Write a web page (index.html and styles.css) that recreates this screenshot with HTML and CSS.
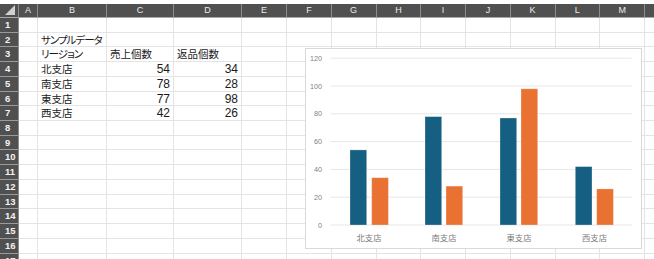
FILE: index.html
```html
<!DOCTYPE html>
<html lang="ja">
<head>
    <meta charset="UTF-8">
    <title>サンプルデータ</title>
    <link rel="stylesheet" href="styles.css">
</head>
<body>

<div class="sheet">
    <!-- column headers -->
    <div class="hd corner"><span class="tri"></span></div>
    <div class="hd">A</div><div class="hd">B</div><div class="hd">C</div><div class="hd">D</div><div class="hd">E</div>
    <div class="hd">F</div><div class="hd">G</div><div class="hd">H</div><div class="hd">I</div><div class="hd">J</div>
    <div class="hd">K</div><div class="hd">L</div><div class="hd">M</div><div class="hd"></div>

    <div class="rh">1</div><div class="c"></div><div class="c"></div><div class="c"></div><div class="c"></div><div class="c"></div><div class="c"></div><div class="c"></div><div class="c"></div><div class="c"></div><div class="c"></div><div class="c"></div><div class="c"></div><div class="c"></div><div class="c"></div>
    <div class="rh">2</div><div class="c"></div><div class="c txt kana">サンプルデータ</div><div class="c"></div><div class="c"></div><div class="c"></div><div class="c"></div><div class="c"></div><div class="c"></div><div class="c"></div><div class="c"></div><div class="c"></div><div class="c"></div><div class="c"></div><div class="c"></div>
    <div class="rh">3</div><div class="c"></div><div class="c txt kana">リージョン</div><div class="c txt">売上個数</div><div class="c txt">返品個数</div><div class="c"></div><div class="c"></div><div class="c"></div><div class="c"></div><div class="c"></div><div class="c"></div><div class="c"></div><div class="c"></div><div class="c"></div><div class="c"></div>
    <div class="rh">4</div><div class="c"></div><div class="c txt">北支店</div><div class="c num">54</div><div class="c num">34</div><div class="c"></div><div class="c"></div><div class="c"></div><div class="c"></div><div class="c"></div><div class="c"></div><div class="c"></div><div class="c"></div><div class="c"></div><div class="c"></div>
    <div class="rh">5</div><div class="c"></div><div class="c txt">南支店</div><div class="c num">78</div><div class="c num">28</div><div class="c"></div><div class="c"></div><div class="c"></div><div class="c"></div><div class="c"></div><div class="c"></div><div class="c"></div><div class="c"></div><div class="c"></div><div class="c"></div>
    <div class="rh">6</div><div class="c"></div><div class="c txt">東支店</div><div class="c num">77</div><div class="c num">98</div><div class="c"></div><div class="c"></div><div class="c"></div><div class="c"></div><div class="c"></div><div class="c"></div><div class="c"></div><div class="c"></div><div class="c"></div><div class="c"></div>
    <div class="rh">7</div><div class="c"></div><div class="c txt">西支店</div><div class="c num">42</div><div class="c num">26</div><div class="c"></div><div class="c"></div><div class="c"></div><div class="c"></div><div class="c"></div><div class="c"></div><div class="c"></div><div class="c"></div><div class="c"></div><div class="c"></div>
    <div class="rh">8</div><div class="c"></div><div class="c"></div><div class="c"></div><div class="c"></div><div class="c"></div><div class="c"></div><div class="c"></div><div class="c"></div><div class="c"></div><div class="c"></div><div class="c"></div><div class="c"></div><div class="c"></div><div class="c"></div>
    <div class="rh">9</div><div class="c"></div><div class="c"></div><div class="c"></div><div class="c"></div><div class="c"></div><div class="c"></div><div class="c"></div><div class="c"></div><div class="c"></div><div class="c"></div><div class="c"></div><div class="c"></div><div class="c"></div><div class="c"></div>
    <div class="rh">10</div><div class="c"></div><div class="c"></div><div class="c"></div><div class="c"></div><div class="c"></div><div class="c"></div><div class="c"></div><div class="c"></div><div class="c"></div><div class="c"></div><div class="c"></div><div class="c"></div><div class="c"></div><div class="c"></div>
    <div class="rh">11</div><div class="c"></div><div class="c"></div><div class="c"></div><div class="c"></div><div class="c"></div><div class="c"></div><div class="c"></div><div class="c"></div><div class="c"></div><div class="c"></div><div class="c"></div><div class="c"></div><div class="c"></div><div class="c"></div>
    <div class="rh">12</div><div class="c"></div><div class="c"></div><div class="c"></div><div class="c"></div><div class="c"></div><div class="c"></div><div class="c"></div><div class="c"></div><div class="c"></div><div class="c"></div><div class="c"></div><div class="c"></div><div class="c"></div><div class="c"></div>
    <div class="rh">13</div><div class="c"></div><div class="c"></div><div class="c"></div><div class="c"></div><div class="c"></div><div class="c"></div><div class="c"></div><div class="c"></div><div class="c"></div><div class="c"></div><div class="c"></div><div class="c"></div><div class="c"></div><div class="c"></div>
    <div class="rh">14</div><div class="c"></div><div class="c"></div><div class="c"></div><div class="c"></div><div class="c"></div><div class="c"></div><div class="c"></div><div class="c"></div><div class="c"></div><div class="c"></div><div class="c"></div><div class="c"></div><div class="c"></div><div class="c"></div>
    <div class="rh">15</div><div class="c"></div><div class="c"></div><div class="c"></div><div class="c"></div><div class="c"></div><div class="c"></div><div class="c"></div><div class="c"></div><div class="c"></div><div class="c"></div><div class="c"></div><div class="c"></div><div class="c"></div><div class="c"></div>
    <div class="rh">16</div><div class="c"></div><div class="c"></div><div class="c"></div><div class="c"></div><div class="c"></div><div class="c"></div><div class="c"></div><div class="c"></div><div class="c"></div><div class="c"></div><div class="c"></div><div class="c"></div><div class="c"></div><div class="c"></div>
    <div class="rh">17</div><div class="c"></div><div class="c"></div><div class="c"></div><div class="c"></div><div class="c"></div><div class="c"></div><div class="c"></div><div class="c"></div><div class="c"></div><div class="c"></div><div class="c"></div><div class="c"></div><div class="c"></div><div class="c"></div>
</div>

<!-- chart floats over the cells -->
<div class="chart">
    <svg width="337" height="201" viewBox="0 0 337 201">
        <rect x="0.5" y="0.5" width="336" height="200" fill="#ffffff" stroke="#d9d9d9"/>

        <g class="grid">
            <line x1="25.7" y1="10.2" x2="326.7" y2="10.2"/>
            <line x1="25.7" y1="38" x2="326.7" y2="38"/>
            <line x1="25.7" y1="65.8" x2="326.7" y2="65.8"/>
            <line x1="25.7" y1="93.6" x2="326.7" y2="93.6"/>
            <line x1="25.7" y1="121.4" x2="326.7" y2="121.4"/>
            <line x1="25.7" y1="149.2" x2="326.7" y2="149.2"/>
            <line x1="25.7" y1="177" x2="326.7" y2="177"/>
        </g>

        <g class="ylabels">
            <text x="17" y="12.8">120</text>
            <text x="17" y="40.6">100</text>
            <text x="17" y="68.4">80</text>
            <text x="17" y="96.2">60</text>
            <text x="17" y="124">40</text>
            <text x="17" y="151.8">20</text>
            <text x="17" y="179.6">0</text>
        </g>

        <!-- 売上個数 -->
        <g class="bar-blue">
            <rect x="45" y="101.9" width="16.7" height="75.1"/>
            <rect x="120" y="68.6" width="16.7" height="108.4"/>
            <rect x="195" y="70" width="16.7" height="107"/>
            <rect x="270.3" y="118.6" width="16.7" height="58.4"/>
        </g>
        <!-- 返品個数 -->
        <g class="bar-orange">
            <rect x="66.7" y="129.7" width="16.7" height="47.3"/>
            <rect x="141" y="138.1" width="16.7" height="38.9"/>
            <rect x="216" y="40.8" width="16.7" height="136.2"/>
            <rect x="291.7" y="140.9" width="16.7" height="36.1"/>
        </g>

        <g class="xlabels">
            <text x="64" y="192.5">北支店</text>
            <text x="139" y="192.5">南支店</text>
            <text x="214" y="192.5">東支店</text>
            <text x="289.5" y="192.5">西支店</text>
        </g>
    </svg>
</div>

</body>
</html>
```

FILE: styles.css
```css
body {
    margin: 0;
    padding-top: 4px;
    background-color: #ffffff;
    font-family: "Noto Sans CJK JP", "Noto Sans", sans-serif;
    position: relative;
    overflow: hidden;
    width: 654px;
    height: 259px;
}

.sheet {
    display: grid;
    grid-template-columns: 19px 19px 69px 67px 68px 45px repeat(8, 44.75px) 45px;
    grid-template-rows: 14px repeat(17, 14.72px);
    overflow: hidden;
}

/* column header strip */
.hd {
    background-color: #505050;
    color: #ececec;
    font-family: "Liberation Sans", Arial, sans-serif;
    font-size: 9px;
    line-height: 13px;
    text-align: center;
    border-right: 1px solid #8c8c8c;
    border-bottom: 1px solid #a8a8a8;
    box-sizing: border-box;
}

.corner {
    position: relative;
}

.tri {
    position: absolute;
    right: 3px;
    bottom: 2px;
    width: 0;
    height: 0;
    border-left: 10px solid transparent;
    border-bottom: 10px solid #d0d0d0;
}

/* row numbers */
.rh {
    background-color: #505050;
    color: #f2f2f2;
    font-family: "Liberation Sans", Arial, sans-serif;
    font-weight: bold;
    font-size: 9.5px;
    line-height: 14px;
    padding-left: 5px;
    border-right: 1px solid #8c8c8c;
    border-bottom: 1px solid #9a9a9a;
    box-sizing: border-box;
    overflow: hidden;
}

/* body cells */
.c {
    border-right: 1px solid #e4e4e4;
    border-bottom: 1px solid #e4e4e4;
    box-sizing: border-box;
    color: #1a1a1a;
    white-space: nowrap;
}

.txt {
    font-size: 10.5px;
    line-height: 14px;
    padding-left: 3px;
}

.kana {
    font-feature-settings: "palt";
    letter-spacing: -1px;
}

.num {
    font-family: "Liberation Sans", Arial, sans-serif;
    font-size: 12px;
    line-height: 14px;
    text-align: right;
    padding-right: 3px;
}

/* chart */
.chart {
    position: absolute;
    left: 305px;
    top: 48px;
    width: 337px;
    height: 201px;
}

.chart svg {
    display: block;
}

.grid line {
    stroke: #e6e6e6;
    stroke-width: 1;
}

.ylabels text {
    font-family: "Liberation Sans", Arial, sans-serif;
    font-size: 7.2px;
    fill: #7f7f7f;
    text-anchor: end;
}

.xlabels text {
    font-family: "Noto Sans CJK JP", sans-serif;
    font-size: 8.3px;
    fill: #7a7a7a;
    text-anchor: middle;
}

.bar-blue rect {
    fill: #156082;
    stroke: #ffffff;
    stroke-opacity: 0.35;
    stroke-width: 0.8;
}

.bar-orange rect {
    fill: #e97132;
    stroke: #ffffff;
    stroke-opacity: 0.35;
    stroke-width: 0.8;
}
```
